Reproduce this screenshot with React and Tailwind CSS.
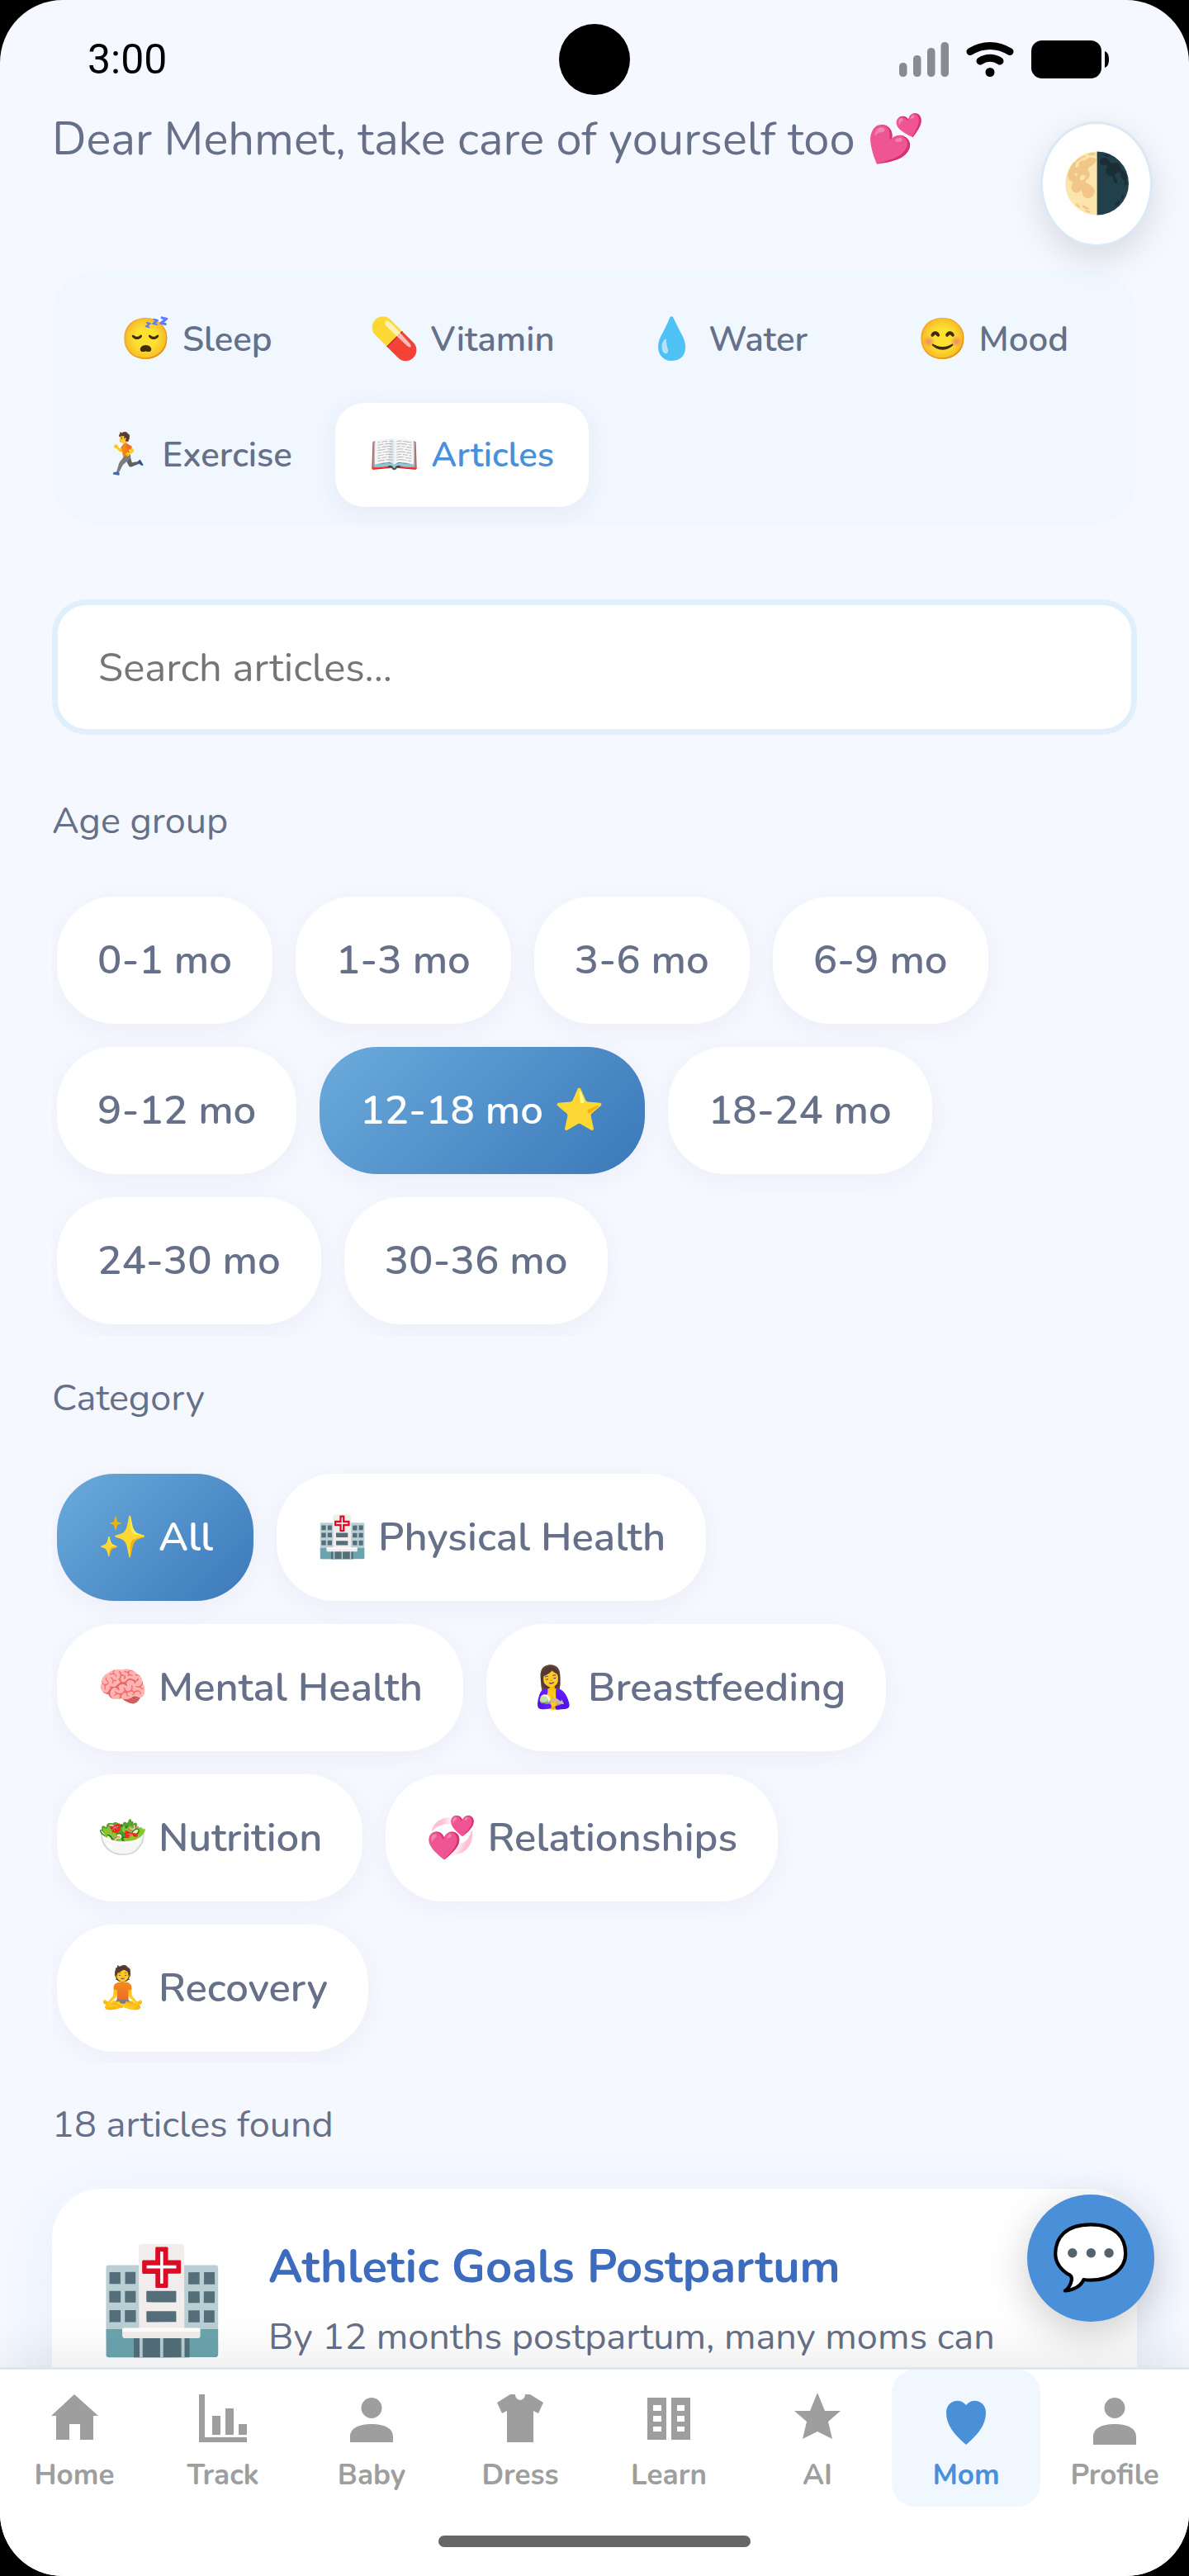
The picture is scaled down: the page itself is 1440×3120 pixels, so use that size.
import { useState } from 'react';

const tabs = [
  { icon: '😴', label: 'Sleep' },
  { icon: '💊', label: 'Vitamin' },
  { icon: '💧', label: 'Water' },
  { icon: '😊', label: 'Mood' },
  { icon: '🏃', label: 'Exercise' },
  { icon: '📖', label: 'Articles' },
];

const ageGroups = [
  { label: '0-1 mo' },
  { label: '1-3 mo' },
  { label: '3-6 mo' },
  { label: '6-9 mo' },
  { label: '9-12 mo' },
  { label: '12-18 mo', suffix: ' ⭐' },
  { label: '18-24 mo' },
  { label: '24-30 mo' },
  { label: '30-36 mo' },
];

const categories = [
  { icon: '✨', label: 'All' },
  { icon: '🏥', label: 'Physical Health' },
  { icon: '🧠', label: 'Mental Health' },
  { icon: '🤱', label: 'Breastfeeding' },
  { icon: '🥗', label: 'Nutrition' },
  { icon: '💞', label: 'Relationships' },
  { icon: '🧘', label: 'Recovery' },
];

const navItems = [
  { label: 'Home', path: 'M35 9 64 35H58V64H42V45H29V64H13V35H7Z' },
  { label: 'Track', path: 'M6 9h7v52h51v6H6Z M22 35h10v23H22Z M38 26h10v32H38Z M54 45h10v13H54Z' },
  {
    label: 'Baby',
    path: 'M35 13a12.5 12.5 0 1 1 0 25a12.5 12.5 0 1 1 0-25Z M9 67V60C9 50 20 45 35 45S61 50 61 60V67Z',
  },
  {
    label: 'Dress',
    path: 'M23 9H29C29 18 41 18 41 9H47L63 19 57 32 51 29V67H19V29L13 32 7 19Z',
  },
  {
    label: 'Learn',
    path: 'M9 13H32V64H9Z M38 13H61V64H38Z M16 22V29H26V22Z M16 35V42H26V35Z M16 48V54H26V48Z M45 22V29H54V22Z M45 35V42H54V35Z M45 48V54H54V48Z',
  },
  { label: 'AI', path: 'M35 7 44 29H63L48 42 53 63 35 54 17 63 22 42 7 29H26Z' },
  { label: 'Mom', path: 'M35 70C20 57 11 46 11 31C11 17 27 12 35 22C43 12 59 17 59 31C59 46 50 57 35 70Z' },
  {
    label: 'Profile',
    path: 'M35 13a12.5 12.5 0 1 1 0 25a12.5 12.5 0 1 1 0-25Z M9 70V60C9 50 20 45 35 45S61 50 61 60V70Z',
  },
];

const StatusBar = () => (
  <div className="relative flex h-[130px] shrink-0 items-center justify-between pt-[14px] pr-[97px] pl-[106px]">
    <span className="font-[Roboto,sans-serif] text-[50px] leading-[60px] text-black">3:00</span>
    <div className="absolute top-[29px] left-1/2 size-[86px] -translate-x-1/2 rounded-full bg-black" />
    <div className="flex items-center gap-[21px]">
      <svg className="h-[46px] w-[60px]" viewBox="0 0 60 46" fill="#898b8e">
        <rect x="0" y="27" width="9.500" height="17" rx="4.500" />
        <rect x="17" y="18" width="9.500" height="26" rx="4.500" />
        <rect x="34" y="9" width="9.500" height="35" rx="4.500" />
        <rect x="50.500" y="2" width="9.500" height="42" rx="4.500" />
      </svg>
      <svg className="h-[46px] w-[58px]" viewBox="0 0 58 46" fill="none" stroke="#000" strokeWidth="9" strokeLinecap="round">
        <path d="M5 13.500C20 4 38 4 53 13.500" />
        <path d="M17 25C24 20 34 20 41 25" />
        <circle cx="29" cy="38.500" r="5.500" fill="#000" stroke="none" />
      </svg>
      <svg className="h-[46px] w-[94px]" viewBox="0 0 94 46">
        <rect width="85" height="46" rx="13" />
        <path d="M89 13c3 1 5 4 5 10s-2 9-5 10z" />
      </svg>
    </div>
  </div>
);

const Chip = ({ icon, label, suffix, active, onClick }) => (
  <button
    type="button"
    onClick={onClick}
    aria-pressed={active}
    className={`h-[154px] rounded-[70px] px-[49px] text-[49px] font-semibold whitespace-nowrap shadow-[0_7px_28px_rgba(120,60,140,0.06)] ${
      active ? 'bg-linear-135 from-[#6cabdb] to-[#3a78ba] text-white' : 'bg-white text-[#667089]'
    }`}
  >
    {icon && `${icon} `}
    {label}
    {suffix}
  </button>
);

const ChipGroup = ({ title, items, selected, onSelect }) => (
  <section>
    <h2 className="text-[45px] leading-[62px]">{title}</h2>
    <div className="mt-[46px] flex flex-wrap gap-[28px] overflow-hidden pt-[14px] pr-[42px] pb-[14px] pl-[6px]">
      {items.map((item) => (
        <Chip key={item.label} {...item} active={selected === item.label} onClick={() => onSelect(item.label)} />
      ))}
    </div>
  </section>
);

const BottomNav = () => (
  <nav className="relative shrink-0 border-t-[3px] border-[#dbe6f4] bg-white shadow-[0_-14px_56px_rgba(0,0,0,0.08)]">
    <div className="grid grid-cols-8">
      {navItems.map(({ label, path }) => {
        const active = label === 'Mom';
        return (
          <a
            key={label}
            href={`#${label.toLowerCase()}`}
            className={`flex h-[166px] flex-col items-center rounded-[28px] pt-[21px] ${
              active ? 'bg-[#f0f7ff] text-[#4a90d9]' : 'text-[#9e9e9e]'
            }`}
          >
            <svg className="size-[70px] overflow-visible" viewBox="0 0 70 70" fill="currentColor">
              <path d={path} fillRule="evenodd" />
            </svg>
            <span className="mt-[13px] text-[35px] leading-[48px] font-bold">{label}</span>
          </a>
        );
      })}
    </div>
    <div className="flex h-[84px] items-center justify-center">
      <div className="h-[14px] w-[378px] rounded-full bg-[#666666]" />
    </div>
  </nav>
);

const App = () => {
  const [tab, setTab] = useState('Articles');
  const [age, setAge] = useState('12-18 mo');
  const [category, setCategory] = useState('All');
  const [query, setQuery] = useState('');

  return (
    <div className="h-screen bg-black font-[Nunito,Lato,sans-serif] text-[#667089]">
      <div className="relative flex h-full flex-col overflow-hidden rounded-[76px] bg-[#f5f8ff]">
        <StatusBar />

        <main className="min-h-0 flex-1 overflow-hidden px-[63px]">
          <p className="text-[56px] leading-[78px]">Dear Mehmet, take care of yourself too 💕</p>

          <div className="mt-[119px] grid grid-cols-4 gap-[14px] rounded-[56px] bg-[#f0f7ff] p-[21px]">
            {tabs.map(({ icon, label }) => (
              <button
                key={label}
                type="button"
                onClick={() => setTab(label)}
                className={`flex h-[126px] items-center justify-center gap-[14px] rounded-[35px] text-[42px] font-semibold ${
                  tab === label ? 'bg-white text-[#4a90d9] shadow-[0_7px_28px_rgba(120,60,140,0.07)]' : ''
                }`}
              >
                <span className="text-[49px]">{icon}</span>
                {label}
              </button>
            ))}
          </div>

          <input
            type="text"
            aria-label="Search articles"
            placeholder="Search articles..."
            value={query}
            onChange={(e) => setQuery(e.target.value)}
            className="mt-[91px] block h-[164px] w-full rounded-[42px] border-[7px] border-[#e1effb] bg-white px-[49px] text-[49px] placeholder-[#757575] outline-none"
          />

          <div className="mt-[74px]">
            <ChipGroup title="Age group" items={ageGroups} selected={age} onSelect={setAge} />
          </div>
          <div className="mt-[45px]">
            <ChipGroup title="Category" items={categories} selected={category} onSelect={setCategory} />
          </div>

          <p className="mt-[44px] text-[45px] leading-[62px]">18 articles found</p>

          <article className="mt-[46px] flex gap-[52px] rounded-[60px] bg-white p-[56px] pb-[84px] shadow-[0_14px_70px_rgba(74,110,217,0.07)]">
            <span className="mt-[7px] text-[124px] leading-[150px]">🏥</span>
            <div>
              <h3 className="text-[56px] leading-[78px] font-bold text-[#3d6bbd]">Athletic Goals Postpartum</h3>
              <p className="mt-[12px] text-[45px] leading-[68px]">By 12 months postpartum, many moms can</p>
            </div>
          </article>
        </main>

        <BottomNav />

        <button
          type="button"
          aria-label="Toggle night mode"
          className="absolute top-[147px] right-[44px] h-[152px] w-[136px] rounded-[50%] border-[3px] border-[#dbe8f5] bg-white text-[70px] shadow-[0_14px_42px_rgba(0,0,0,0.12)]"
        >
          🌗
        </button>
        <button
          type="button"
          aria-label="Open chat"
          className="absolute right-[42px] bottom-[308px] size-[154px] rounded-full bg-[#4a90d9] text-[77px] shadow-[0_14px_50px_rgba(0,0,0,0.2)]"
        >
          💬
        </button>
      </div>
    </div>
  );
};

export default App;
